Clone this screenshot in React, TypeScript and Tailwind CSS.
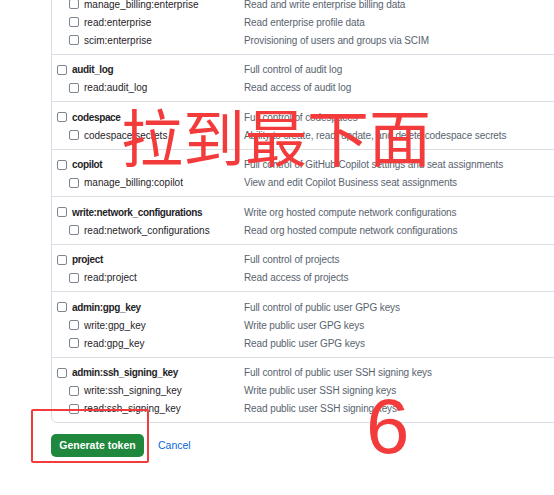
import React from 'react';

interface Scope {
  name: string;
  desc: string;
  children?: Array<{ name: string; desc: string }>;
}

const scopes: Scope[] = [
  {
    name: 'admin:enterprise',
    desc: 'Full control of enterprises',
    children: [
      { name: 'manage_runners:enterprise', desc: 'Manage enterprise runners and runner groups' },
      { name: 'manage_billing:enterprise', desc: 'Read and write enterprise billing data' },
      { name: 'read:enterprise', desc: 'Read enterprise profile data' },
      { name: 'scim:enterprise', desc: 'Provisioning of users and groups via SCIM' },
    ],
  },
  { name: 'audit_log', desc: 'Full control of audit log', children: [{ name: 'read:audit_log', desc: 'Read access of audit log' }] },
  { name: 'codespace', desc: 'Full control of codespaces', children: [{ name: 'codespace:secrets', desc: 'Ability to create, read, update, and delete codespace secrets' }] },
  { name: 'copilot', desc: 'Full control of GitHub Copilot settings and seat assignments', children: [{ name: 'manage_billing:copilot', desc: 'View and edit Copilot Business seat assignments' }] },
  { name: 'write:network_configurations', desc: 'Write org hosted compute network configurations', children: [{ name: 'read:network_configurations', desc: 'Read org hosted compute network configurations' }] },
  { name: 'project', desc: 'Full control of projects', children: [{ name: 'read:project', desc: 'Read access of projects' }] },
  {
    name: 'admin:gpg_key',
    desc: 'Full control of public user GPG keys',
    children: [
      { name: 'write:gpg_key', desc: 'Write public user GPG keys' },
      { name: 'read:gpg_key', desc: 'Read public user GPG keys' },
    ],
  },
  {
    name: 'admin:ssh_signing_key',
    desc: 'Full control of public user SSH signing keys',
    children: [
      { name: 'write:ssh_signing_key', desc: 'Write public user SSH signing keys' },
      { name: 'read:ssh_signing_key', desc: 'Read public user SSH signing keys' },
    ],
  },
];

const Box = () => <span className="inline-block h-[10px] w-[10px] shrink-0 rounded-[2px] border border-[#7d8590] bg-white" />;

const Row = ({ name, desc, child }: { name: string; desc: string; child?: boolean }) => (
  <div className="flex h-[18px] items-center">
    <div className={`flex w-[192px] items-center gap-[5px] ${child ? 'pl-[17px]' : 'pl-[5px]'}`}>
      <Box />
      <span className={child ? 'text-[#1f2328]' : 'font-bold tracking-[-0.35px] text-[#1f2328]'}>{name}</span>
    </div>
    <span className="tracking-[-0.1px] text-[#59636e]">{desc}</span>
  </div>
);

export default function App() {
  return (
    <div className="relative h-[495px] w-[554px] overflow-hidden bg-white text-[10px]" style={{ fontFamily: '"Liberation Sans", Arial, sans-serif' }}>
      <div className="ml-[51px] mt-[-48px] w-[600px] rounded-md border border-[#d8dee4]">
        {scopes.map((s, i) => (
          <div key={s.name} className={`pt-[6px] pb-[4.5px] ${i > 0 ? 'border-t border-[#d8dee4]' : ''}`}>
            <Row name={s.name} desc={s.desc} />
            {s.children?.map((c) => <Row key={c.name} name={c.name} desc={c.desc} child />)}
          </div>
        ))}
      </div>
      <div className="ml-[51px] mt-[11px] flex items-center gap-[14px]">
        <button className="h-[23px] w-[93px] rounded-[5px] bg-[#1f883d] text-[10.5px] font-semibold text-white">Generate token</button>
        <span className="text-[10.5px] text-[#0969da]">Cancel</span>
      </div>

      <div className="absolute left-[121px] top-[104px] text-[62px] leading-none text-[#f43b3b]" style={{ fontFamily: '"Noto Sans CJK SC", sans-serif' }}>拉到最下面</div>
      <div className="absolute left-[366px] top-[387px] text-[78px] leading-none text-[#f43b3b]">6</div>
      <div className="absolute left-[31px] top-[409px] h-[54px] w-[118px] rounded-[2px] border-2 border-[#f43b3b]" />
    </div>
  );
}
